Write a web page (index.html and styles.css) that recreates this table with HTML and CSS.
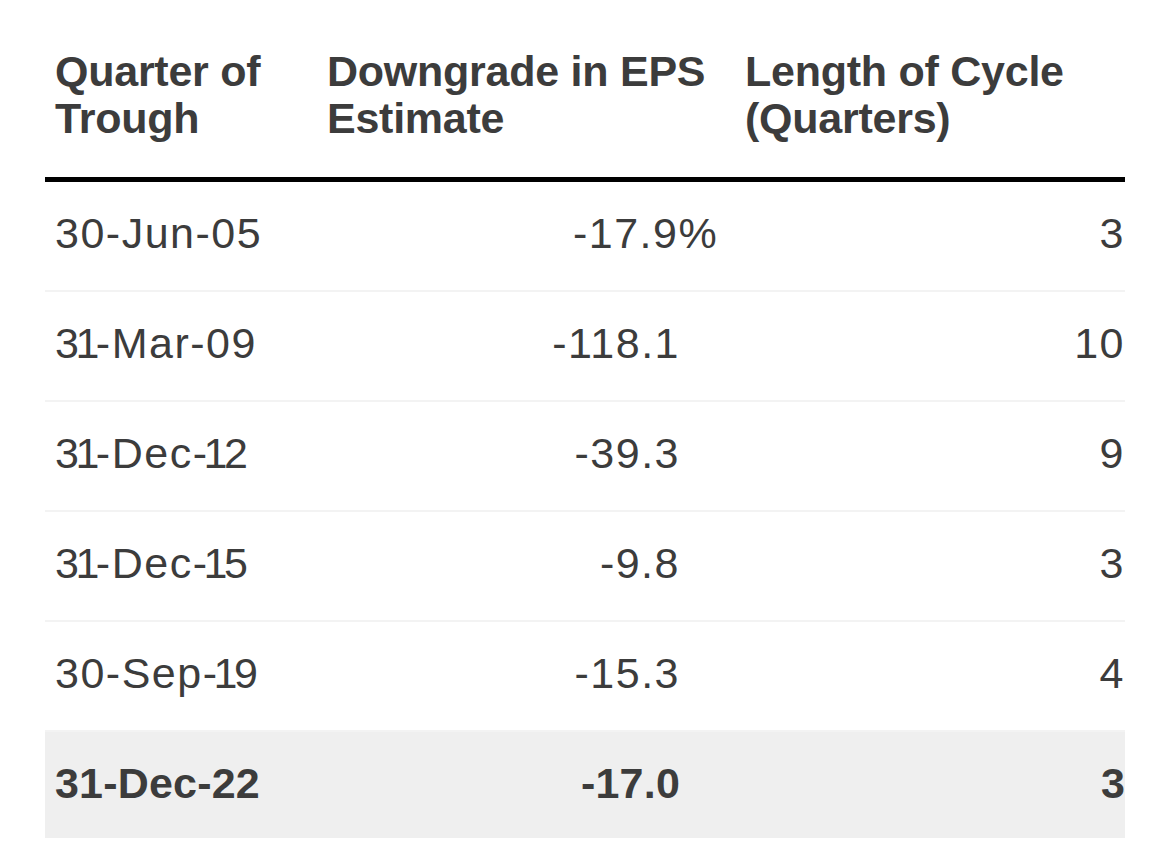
FILE: index.html
```html
<!DOCTYPE html>
<html lang="en">
<head>
<meta charset="utf-8">
<title>EPS Downgrade Cycles</title>
<link rel="stylesheet" href="styles.css">
</head>
<body>
<div class="table">
  <div class="row head">
    <div class="cell">Quarter of<br>Trough</div>
    <div class="cell">Downgrade in EPS<br>Estimate</div>
    <div class="cell">Length of Cycle<br>(Quarters)</div>
  </div>
  <div class="row">
    <div class="cell">30-Jun-05</div>
    <div class="cell num">-17.9<span class="pct">%</span></div>
    <div class="cell num last">3</div>
  </div>
  <div class="row">
    <div class="cell"><span class="p1">31</span>-Mar-09</div>
    <div class="cell num">-118.1</div>
    <div class="cell num last">10</div>
  </div>
  <div class="row">
    <div class="cell"><span class="p1">31</span>-Dec<span class="p1">-1</span>2</div>
    <div class="cell num">-39.3</div>
    <div class="cell num last">9</div>
  </div>
  <div class="row">
    <div class="cell"><span class="p1">31</span>-Dec<span class="p1">-1</span>5</div>
    <div class="cell num">-9.8</div>
    <div class="cell num last">3</div>
  </div>
  <div class="row">
    <div class="cell">30-Sep<span class="p1">-1</span>9</div>
    <div class="cell num">-15.3</div>
    <div class="cell num last">4</div>
  </div>
  <div class="row current">
    <div class="cell">31-Dec-22</div>
    <div class="cell num">-17.0</div>
    <div class="cell num last">3</div>
  </div>
</div>
</body>
</html>
```

FILE: styles.css
```css
html, body {
  margin: 0;
  padding: 0;
  background: #ffffff;
}

body {
  font-family: "Liberation Sans", Arial, Helvetica, sans-serif;
  color: #3c3c3c;
  font-size: 43px;
}

.table {
  width: 1080px;
  margin-left: 45px;
}

.row {
  display: grid;
  grid-template-columns: 272px 418px 390px;
  height: 108px;
  border-bottom: 2px solid #f3f3f3;
  box-sizing: content-box;
}

.cell {
  padding: 27px 0 0 10px;
  line-height: 48px;
  white-space: nowrap;
  letter-spacing: 1.5px;
}

/* tighter pair around a proportional (narrow) figure one */
.p1 {
  letter-spacing: -3.5px;
}

.num {
  text-align: right;
  padding-left: 0;
  padding-right: 55px;
}

.num.last {
  padding-right: 0;
}

.pct {
  margin-right: -0.889em;
}

.head {
  height: auto;
  padding-top: 48px;
  padding-bottom: 35px;
  border-bottom: 5px solid #000000;
}

.head .cell {
  padding-top: 0;
  font-weight: 700;
  line-height: 47px;
  letter-spacing: -0.25px;
}

.current {
  background: #efefef;
  font-weight: 700;
  height: 106px;
  border-bottom: none;
}

.current .cell {
  letter-spacing: 0.2px;
}
```
